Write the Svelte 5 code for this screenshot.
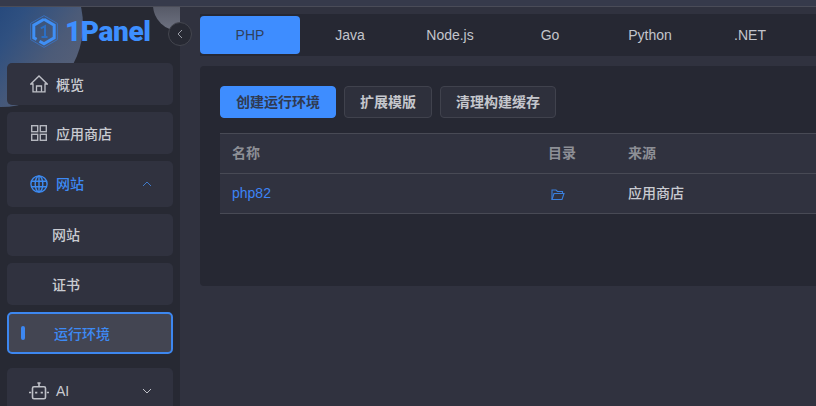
<script>
  const tabs = ['PHP', 'Java', 'Node.js', 'Go', 'Python', '.NET'];
</script>

<div class="page">
  <div class="topline"></div>
  <div class="main">
    <aside class="side">
      <div class="decor">
        <div class="blob one"></div>
        <div class="blob two"></div>
      </div>
      <div class="logo">
        <svg width="28" height="33" viewBox="0 0 28 33" fill="none">
          <path d="M14 .6 L27.4 8.4 V24.6 L14 32.4 L.6 24.6 V8.4 Z" stroke="#3a75c8" stroke-width="0.8"/>
          <path d="M14 4.2 L24.2 10.2 V22.8 L14 28.8 L9.5 26.2 M6.6 24.4 L3.8 22.8 V10.2 L14 4.2" stroke="#3f8ff5" stroke-width="3"/>
          <path d="M10.8 13.4 L15 11.2 V22 M11.5 22 H17.5" stroke="#2c6fc4" stroke-width="2"/>
        </svg>
        <span class="word">1Panel</span>
      </div>
      <nav class="menu">
        <div class="item">
          <svg class="ic" width="18" height="18" viewBox="0 0 18 18" fill="none" stroke="#bfc1c8" stroke-width="1.3">
            <path d="M.8 9 L9 1 L17.2 9 H15 V16.8 H3 V9 Z"/>
            <path d="M6.5 16.8 V11 H11.5 V16.8"/>
          </svg>
          <span>概览</span>
        </div>
        <div class="item">
          <svg class="ic" width="18" height="18" viewBox="0 0 18 18" fill="none" stroke="#b5b7bf" stroke-width="1.4">
            <rect x="1.7" y="1.7" width="6" height="6"/>
            <rect x="10.3" y="1.7" width="6" height="6"/>
            <rect x="1.7" y="10.3" width="6" height="6"/>
            <rect x="10.3" y="10.3" width="6" height="6"/>
          </svg>
          <span>应用商店</span>
        </div>
        <div class="item tall on">
          <svg class="ic" width="18" height="18" viewBox="0 0 18 18" fill="none" stroke="#3d8af0" stroke-width="1.4">
            <circle cx="9" cy="9" r="8.1"/>
            <ellipse cx="9" cy="9" rx="3.8" ry="8"/>
            <path d="M1.2 6.2 H16.8 M1.2 11.8 H16.8 M9 1 V17"/>
          </svg>
          <span class="lift">网站</span>
          <svg class="chev" width="10" height="6" viewBox="0 0 10 6" fill="none" stroke="#3f79c8" stroke-width="1"><path d="M1 5 L5 1 L9 5"/></svg>
        </div>
        <div class="item sub"><span class="lift">网站</span></div>
        <div class="item sub">证书</div>
        <div class="item sub active"><i class="bar"></i><span>运行环境</span></div>
        <div class="item ai">
          <svg class="ic robot" width="20" height="18" viewBox="0 0 20 18" fill="none" stroke="#bfc1c8" stroke-width="1.6">
            <rect x="3.5" y="4.8" width="13" height="12" rx="1.5"/>
            <path d="M10 4.8 V1.4 M8.4 1 H11.6"/>
            <path d="M0 10.5 H2.2 M17.8 10.5 H20"/>
            <path d="M7.2 9.8 V11.6 M12.8 9.8 V11.6" stroke-width="2.2"/>
          </svg>
          <span class="latin">AI</span>
          <svg class="chev" width="10" height="6" viewBox="0 0 10 6" fill="none" stroke="#bfc1c8" stroke-width="1"><path d="M1 1 L5 5 L9 1"/></svg>
        </div>
      </nav>
      <button class="collapse" aria-label="collapse">
        <svg width="6" height="10" viewBox="0 0 6 10" fill="none" stroke="#9a9ca6" stroke-width="1"><path d="M5 1 L1 5 L5 9"/></svg>
      </button>
    </aside>

    <section class="content">
      <div class="tabs">
        {#each tabs as t, i}
          <div class="tab" class:sel={i === 0}>{t}</div>
        {/each}
      </div>
      <div class="card">
        <div class="btns">
          <button class="btn primary">创建运行环境</button>
          <button class="btn">扩展模版</button>
          <button class="btn">清理构建缓存</button>
        </div>
        <div class="table">
          <div class="row head">
            <div class="c name">名称</div>
            <div class="c dir">目录</div>
            <div class="c src">来源</div>
          </div>
          <div class="row">
            <div class="c name link">php82</div>
            <div class="c dir">
              <svg width="14" height="13" viewBox="0 0 14 13" fill="none" stroke="#3a7fdc" stroke-width="1.1">
                <path d="M1 11.5 V2 H5 L6.5 3.5 H11.5 V5.5"/>
                <path d="M1 11.5 H11 L13 5.5 H3 L1 11.5 Z"/>
              </svg>
            </div>
            <div class="c src plain">应用商店</div>
          </div>
        </div>
      </div>
    </section>
  </div>
</div>

<style>
  :global(body) {
    margin: 0;
    background: #30323f;
    font-family: "Liberation Sans", "Noto Sans CJK SC", sans-serif;
    overflow: hidden;
  }
  .page {
    width: 816px;
    height: 406px;
    overflow: hidden;
    display: flex;
    flex-direction: column;
  }
  .topline {
    height: 6px;
    flex: none;
    background: #363a4b;
    border-bottom: 1px solid #4a4c58;
  }
  .main {
    display: flex;
    flex: 1;
    min-height: 0;
  }
  .side {
    width: 180px;
    flex: none;
    background: #272933;
    position: relative;
    padding: 56px 7px 0;
    box-sizing: border-box;
  }
  .decor {
    position: absolute;
    inset: 0;
    overflow: hidden;
  }
  .blob {
    position: absolute;
    border-radius: 50%;
  }
  .blob.one {
    left: -81px;
    top: -64px;
    width: 164px;
    height: 164px;
    background: linear-gradient(125deg, #1f4379 35%, #2f5080 55%, #4c5b78 75%, #5e6376 100%);
  }
  .blob.two {
    left: 153px;
    top: -28px;
    width: 54px;
    height: 52px;
    background: linear-gradient(180deg, #4a4d5a 30%, #6f7382 100%);
  }
  .logo {
    position: absolute;
    left: 30px;
    top: 8px;
    display: flex;
    align-items: center;
    gap: 7px;
    height: 33px;
  }
  .word {
    font-family: Roboto, "Liberation Sans", sans-serif;
    font-size: 28px;
    font-weight: 900;
    color: #3d8fff;
    letter-spacing: -0.4px;
    line-height: 33px;
  }
  .menu {
    position: relative;
    display: flex;
    flex-direction: column;
    gap: 7px;
  }
  .item {
    height: 42px;
    background: #30323f;
    border-radius: 5px;
    display: flex;
    align-items: center;
    padding-left: 23px;
    color: #c9cbd1;
    font-size: 14px;
    font-weight: 500;
    box-sizing: border-box;
    position: relative;
  }
  .item .ic {
    margin-right: 8px;
    flex: none;
  }
  .lift {
    margin-bottom: 2px;
  }
  .item.tall {
    height: 46px;
  }
  .item.on {
    color: #3d8af5;
  }
  .chev {
    position: absolute;
    left: 135px;
    top: 50%;
    margin-top: -3px;
  }
  .item.sub {
    padding-left: 45px;
  }
  .item.active {
    background: #434552;
    border: 2px solid #3d87f0;
    color: #3d8af5;
    padding-left: 45px;
  }
  .bar {
    position: absolute;
    left: 12px;
    top: 12px;
    width: 4px;
    height: 14px;
    border-radius: 2px;
    background: #3d87f0;
  }
  .item.ai {
    margin-top: 7px;
    padding-left: 22px;
    height: 46px;
  }
  .item.ai .ic {
    margin-right: 7px;
  }
  .latin {
    font-size: 14px;
    font-weight: 400;
  }
  .collapse {
    position: absolute;
    left: 168px;
    top: 15px;
    width: 24px;
    height: 24px;
    border-radius: 50%;
    background: #272933;
    border: 1px solid #44464f;
    padding: 0;
    display: flex;
    align-items: center;
    justify-content: center;
    z-index: 2;
  }
  .content {
    flex: 1;
    min-width: 0;
    padding: 7px 0 0 20px;
  }
  .tabs {
    display: flex;
    height: 42px;
    box-sizing: border-box;
    padding: 2px 0;
    background: #262833;
  }
  .tab {
    width: 100px;
    height: 38px;
    display: flex;
    align-items: center;
    justify-content: center;
    font-size: 14px;
    color: #c3c5cc;
    border-radius: 4px;
  }
  .tab.sel {
    background: #3e8dff;
    color: #30405c;
  }
  .card {
    margin-top: 10px;
    height: 220px;
    background: #262833;
    border-radius: 4px 0 0 4px;
    padding: 20px 0 0 20px;
    box-sizing: border-box;
  }
  .btns {
    display: flex;
    gap: 8px;
  }
  .btn {
    height: 32px;
    padding: 0 15px 2px;
    box-sizing: border-box;
    border-radius: 4px;
    border: 1px solid #40424d;
    background: #2e303c;
    color: #c5c7cd;
    font-family: inherit;
    font-size: 14px;
    font-weight: 700;
  }
  .btn.primary {
    background: #3e8dff;
    border-color: #3e8dff;
    color: #2f3a52;
  }
  .table {
    margin-top: 15px;
    border-top: 1px solid #484a55;
  }
  .row {
    display: flex;
    height: 40px;
    align-items: center;
    background: #30323f;
    border-bottom: 1px solid #484a55;
    box-sizing: border-box;
    font-size: 14px;
    padding-bottom: 2px;
  }
  .row.head {
    color: #8d8f96;
    font-weight: 700;
  }
  .row.head .c {
    margin-bottom: 2px;
  }
  .c {
    box-sizing: border-box;
  }
  .name {
    width: 316px;
    padding-left: 12px;
  }
  .dir {
    width: 80px;
    padding-left: 12px;
    display: flex;
    align-items: center;
  }
  .dir svg {
    margin-left: 3px;
    margin-top: 4px;
  }
  .src {
    padding-left: 12px;
  }
  .link {
    color: #3d84f5;
  }
  .plain {
    color: #c9cbd1;
    font-weight: 500;
    margin-bottom: 2px;
  }
</style>
